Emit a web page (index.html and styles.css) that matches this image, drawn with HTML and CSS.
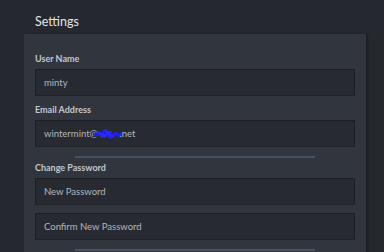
FILE: index.html
```html
<!DOCTYPE html>
<html>
<head>
<meta charset="utf-8">
<link rel="stylesheet" href="styles.css">
</head>
<body>
<div class="header">Settings</div>
<div class="panel">
  <div class="field">
    <div class="label">User Name</div>
    <div class="input">minty</div>
  </div>
  <div class="field">
    <div class="label">Email Address</div>
    <div class="input">wintermint@<span class="redact"><svg width="30" height="12" viewBox="0 0 34 12"><path d="M2 7 C5 3, 8 10, 11 5 S16 2, 18 8 S24 3, 27 6 S31 9, 33 5" stroke="#1f1fff" stroke-width="3.5" fill="none" stroke-linecap="round"/><path d="M6 4 L14 9 M15 3 L22 9 M10 9 L20 4" stroke="#2a2aff" stroke-width="2.5" fill="none" stroke-linecap="round"/></svg></span>.net</div>
  </div>
  <div class="divider"></div>
  <div class="field">
    <div class="label">Change Password</div>
    <div class="input">New Password</div>
  </div>
  <div class="input second">Confirm New Password</div>
  <div class="divider"></div>
</div>
</body>
</html>
```
FILE: styles.css
```css
html, body {
  margin: 0;
  padding: 0;
  background: #25282e;
  font-family: Lato, "Open Sans", sans-serif;
  overflow: hidden;
}
.header {
  height: 34px;
  box-sizing: border-box;
  padding: 8px 0 0 35px;
  display: flex;
  align-items: center;
  font-size: 12.5px;
  color: #e4e6ea;
}
.panel {
  margin-left: 24px;
  width: 342px;
  box-sizing: border-box;
  padding: 19px 11px 0;
  background: #31363e;
  box-shadow: 2px 0 2px rgba(0,0,0,0.25);
  height: 230px;
}
.field {
  margin-bottom: 8px;
}
.label {
  font-size: 9px;
  font-weight: 700;
  color: #c3c7cd;
  line-height: 12px;
  margin-bottom: 4px;
}
.input {
  height: 27px;
  box-sizing: border-box;
  background: #272a30;
  border: 1px solid #1c1f24;
  border-bottom-color: #202328;
  padding-left: 8px;
  display: flex;
  align-items: center;
  font-size: 9.5px;
  color: #b3b7bd;
}
.input.second {
  margin-top: 1px;
}
.redact {
  display: inline-flex;
  margin: 0 -3px 0 -5px;
}
.divider {
  width: 240px;
  height: 2px;
  margin: 9px auto 4px;
  background: #485064;
}
```
